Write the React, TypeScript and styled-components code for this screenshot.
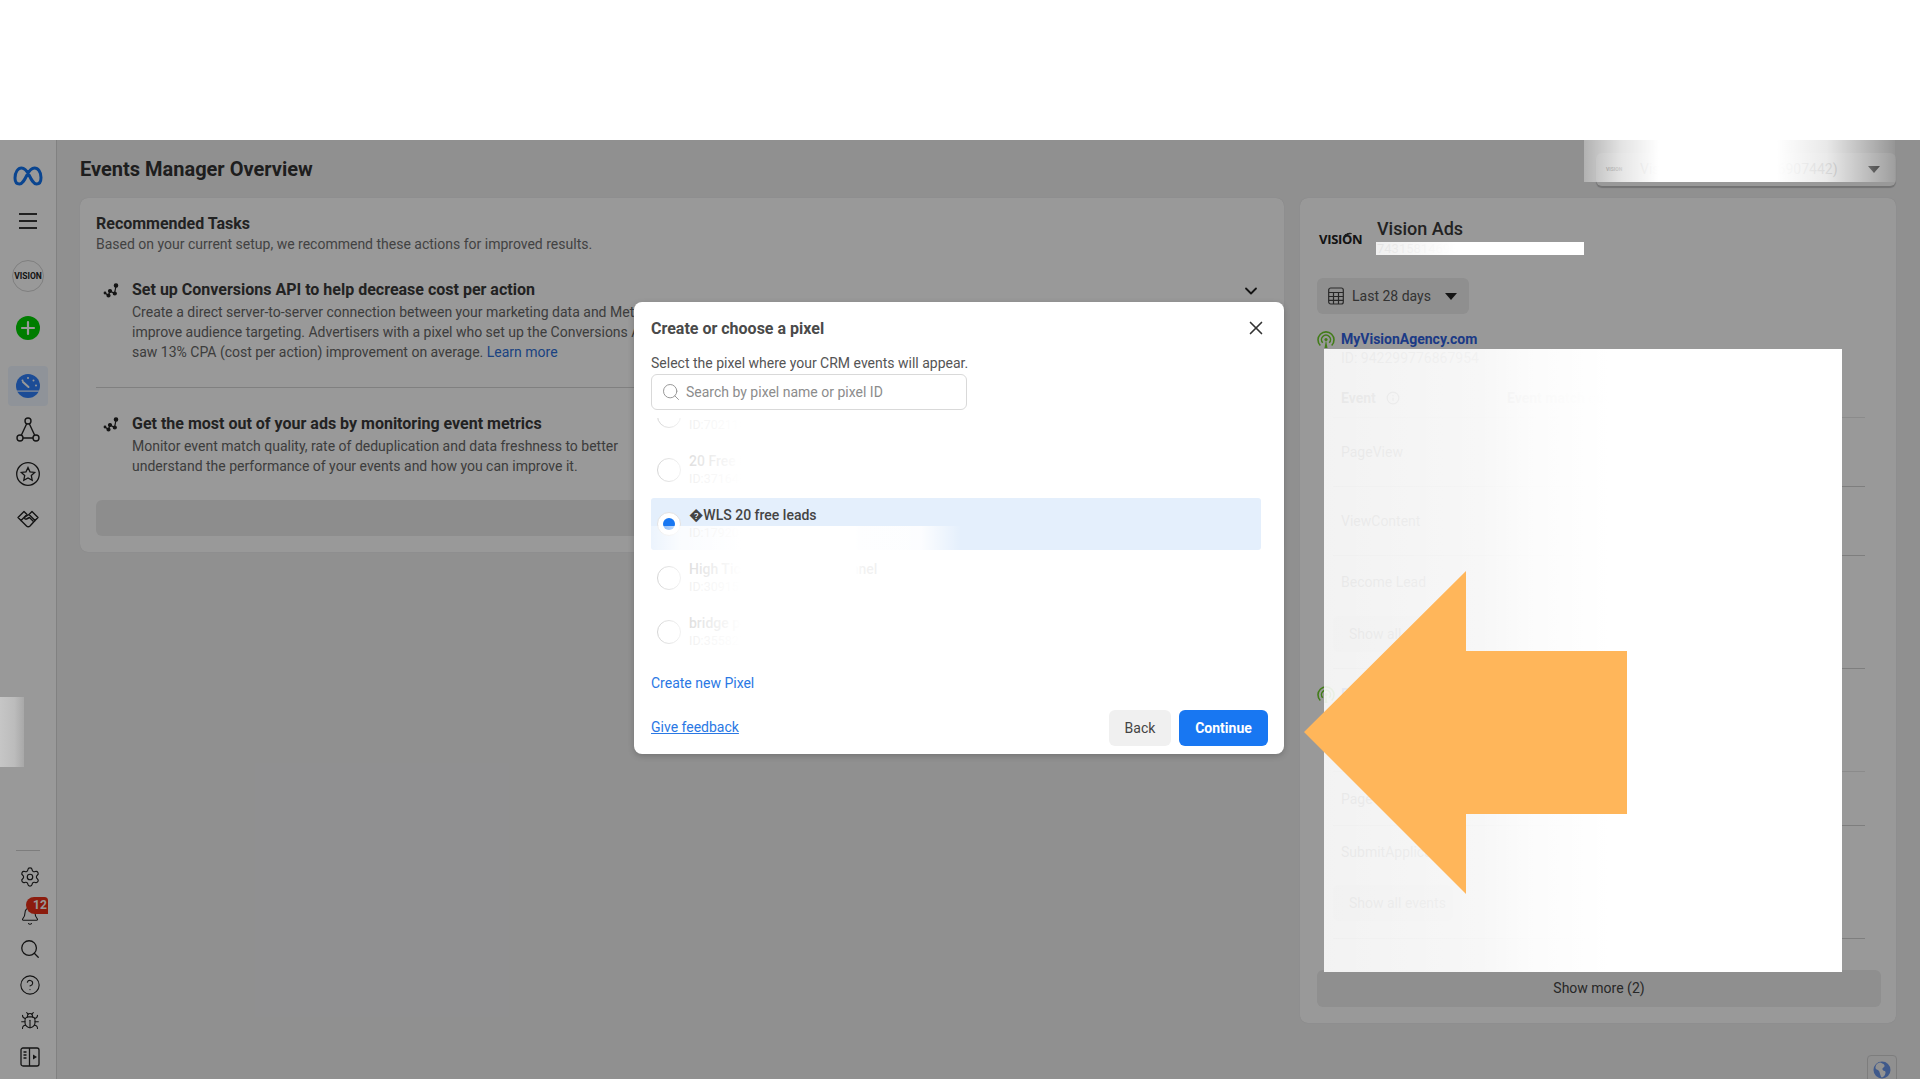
import styled, { createGlobalStyle } from "styled-components";
import { Bell, Bug, ChevronDown, CircleHelp, Info, Search, Settings, X } from "lucide-react";

const GlobalStyle = createGlobalStyle`
  html, body {
    margin: 0;
    padding: 0;
    background: #fff;
    font-family: Roboto, "DejaVu Sans", sans-serif;
  }
  * { box-sizing: border-box; }
`;

const Page = styled.div`
  display: flex;
  flex-direction: column;
  width: 1920px;
  height: 1080px;
  background: #fff;
  overflow: hidden;
`;

const TopBand = styled.div`
  height: 140px;
  flex: none;
  background: #fff;
`;

const Stage = styled.div`
  position: relative;
  display: flex;
  height: 939px;
  flex: none;
  background: #f0f0f1;
  overflow: hidden;
`;

const Dim = styled.div`
  position: absolute;
  inset: 0;
  background: rgba(0, 0, 0, 0.4);
`;

/* left rail */
const Rail = styled.nav`
  width: 57px;
  flex: none;
  display: flex;
  flex-direction: column;
  padding: 14px 0 4px;
  background: #fff;
  border-right: 1px solid #d8d8d8;
  color: #222;
`;

const RailSlot = styled.div<{ $gap?: number; $tall?: boolean; $shift?: number }>`
  height: ${(p) => (p.$tall ? 44 : 36)}px;
  margin-top: ${(p) => p.$gap ?? 0}px;
  flex: none;
  display: flex;
  align-items: center;
  justify-content: center;
  padding-left: ${(p) => p.$shift ?? 0}px;
`;

const RailSpacer = styled.div`
  flex: 1;
`;

const RailRule = styled.div`
  width: 24px;
  height: 1px;
  margin: 0 0 8px 16px;
  background: #d0d0d0;
`;

const ActiveBox = styled.div`
  width: 40px;
  height: 40px;
  display: flex;
  align-items: center;
  justify-content: center;
  border-radius: 4px;
  background: #eef6ff;
`;

const Avatar = styled.div`
  width: 32px;
  height: 32px;
  display: flex;
  align-items: center;
  justify-content: center;
  border-radius: 50%;
  border: 1px solid #d4d4d4;
  font-size: 8.5px;
  font-weight: 700;
  color: #222;
  white-space: nowrap;
`;

const BellWrap = styled.div`
  position: relative;
  width: 20px;
  height: 20px;
  margin-top: 6px;
`;

const CountBadge = styled.span`
  position: absolute;
  left: 6px;
  top: -9px;
  width: 22px;
  height: 17px;
  padding-left: 7px;
  border-radius: 9px 4px 0 10px;
  background: #ea3018;
  color: #fff;
  font-size: 12px;
  font-weight: 700;
  line-height: 17px;
`;

/* main column */
const Main = styled.main`
  flex: 1;
  min-width: 0;
  padding: 0 24px 0 23px;
`;

const Header = styled.header`
  height: 58px;
  display: flex;
  align-items: center;
  justify-content: space-between;
`;

const PageTitle = styled.h1`
  margin: 0;
  font-size: 20px;
  font-weight: 700;
  line-height: 24px;
  color: #333;
`;

const AccountPicker = styled.div`
  width: 300px;
  height: 33px;
  display: flex;
  align-items: center;
  padding: 0 16px 0 10px;
  border-radius: 6px;
  background: #fff;
  box-shadow: 0 2px 1px rgba(0, 0, 0, 0.2);
  color: #777;
  font-size: 14px;
`;

const TinyLogo = styled.span`
  width: 34px;
  font-size: 5px;
  font-weight: 700;
  color: #555;
`;

const Caret = styled.span<{ $color?: string }>`
  width: 0;
  height: 0;
  flex: none;
  margin-left: auto;
  border-left: 6px solid transparent;
  border-right: 6px solid transparent;
  border-top: 7px solid ${(p) => p.$color ?? "#333"};
`;

const Columns = styled.div`
  display: grid;
  grid-template-columns: 1204px 596px;
  gap: 16px;
  align-items: start;
`;

const Card = styled.section`
  border-radius: 8px;
  background: #fff;
  padding: 16px;
  box-shadow: 0 0 1px rgba(0, 0, 0, 0.15);
`;

const CardTitle = styled.div`
  font-size: 16px;
  font-weight: 700;
  line-height: 20px;
  color: #3a3a3a;
`;

const Muted = styled.div`
  font-size: 14px;
  line-height: 20px;
  color: #6f6f6f;
`;

const Task = styled.div<{ $top: number }>`
  display: flex;
  margin-top: ${(p) => p.$top}px;
  padding-left: 6px;
`;

const TaskIcon = styled.svg`
  width: 20px;
  height: 20px;
  flex: none;
  margin-right: 10px;
  color: #222;
`;

const TaskBody = styled.div`
  flex: 1;
`;

const TaskTitle = styled.div`
  font-size: 16px;
  font-weight: 700;
  line-height: 20px;
  margin-bottom: 2px;
  color: #3a3a3a;
`;

const TaskText = styled.div`
  font-size: 14px;
  line-height: 20px;
  color: #666;
  white-space: nowrap;
`;

const TaskLink = styled.a`
  color: #2e6fd8;
`;

const TaskChevron = styled.div`
  width: 20px;
  margin: 1px 7px 0 0;
  color: #222;
`;

const Rule = styled.div<{ $top: number }>`
  height: 1px;
  margin-top: ${(p) => p.$top}px;
  background: #d6d6d6;
`;

const WideBar = styled.div`
  height: 36px;
  margin-top: 24px;
  border-radius: 6px;
  background: #ececec;
`;

/* account card */
const SideCard = styled(Card)`
  height: 825px;
  padding: 16px 16px 16px 17px;
`;

const Brand = styled.div`
  display: flex;
  align-items: center;
  height: 46px;
`;

const BrandMark = styled.div`
  position: relative;
  width: 60px;
  margin-top: 4px;
  padding-left: 2px;
  font-size: 13px;
  font-weight: 700;
  color: #222;
  font-family: "Open Sans", sans-serif;
  letter-spacing: -0.3px;

  &::after {
    content: "";
    position: absolute;
    left: 26px;
    top: 3px;
    width: 10px;
    height: 5px;
    border-top: 2px solid #333;
    border-radius: 50%;
    transform: rotate(-24deg);
  }
`;

const BrandText = styled.div`
  display: flex;
  flex-direction: column;
`;

const BrandName = styled.div`
  font-size: 18px;
  font-weight: 500;
  line-height: 24px;
  color: #3a3a3a;
`;

const BrandId = styled.div`
  font-size: 13px;
  line-height: 16px;
  color: #666;
`;

const RangeButton = styled.div`
  width: 152px;
  height: 36px;
  margin-top: 18px;
  display: flex;
  align-items: center;
  padding: 0 12px 0 11px;
  border-radius: 6px;
  background: #eeeeee;
  color: #555;
  font-size: 14px;
  gap: 8px;
`;

const PixelHead = styled.div<{ $top: number }>`
  display: flex;
  gap: 6px;
  margin-top: ${(p) => p.$top}px;
`;

const PixelIcon = styled.svg`
  width: 18px;
  height: 20px;
  flex: none;
`;

const PixelName = styled.div`
  font-size: 14px;
  font-weight: 700;
  line-height: 20px;
  color: #2f62e0;
`;

const PixelId = styled.div`
  margin-left: 24px;
  font-size: 14px;
  line-height: 18px;
  color: #888;
`;

const EventTable = styled.div`
  width: 532px;
  margin-left: 16px;
`;

const EventRow = styled.div<{ $h: number; $head?: boolean }>`
  height: ${(p) => p.$h}px;
  display: flex;
  align-items: center;
  padding: ${(p) => (p.$head ? "12px 0 0 8px" : "0 0 0 8px")};
  border-bottom: 1px solid ${(p) => (p.$head ? "#e8e8e8" : "#d2d2d2")};
  font-size: 14px;
  font-weight: ${(p) => (p.$head ? 700 : 400)};
  color: #666;
`;

const EventStack = styled.div<{ $h: number }>`
  height: ${(p) => p.$h}px;
  padding: 16px 0 0 8px;
  border-bottom: 1px solid #d2d2d2;
  font-size: 14px;
  line-height: 20px;
  color: #666;
`;

const EventCell = styled.span`
  display: flex;
  align-items: center;
  gap: 10px;
  width: 166px;
  flex: none;
`;

const AllEvents = styled.div<{ $top: number }>`
  width: 120px;
  height: 36px;
  margin: ${(p) => p.$top}px 0 0 -8px;
  padding: 8px 16px;
  border-radius: 6px;
  background: #eeeeee;
  white-space: nowrap;
  color: #666;
`;

const ShowMore = styled.div`
  width: 564px;
  height: 37px;
  margin-top: 31px;
  padding-bottom: 2px;
  display: flex;
  align-items: center;
  justify-content: center;
  border-radius: 6px;
  background: #eeeeee;
  font-size: 14px;
  color: #444;
`;

const GlobeButton = styled.div`
  position: absolute;
  right: 23px;
  bottom: -6px;
  width: 30px;
  height: 30px;
  display: flex;
  align-items: center;
  justify-content: center;
  border: 1px solid #d0d0d0;
  border-radius: 4px;
  background: #f0f0f1;
`;

/* dialog */
const Modal = styled.div`
  position: absolute;
  left: 634px;
  top: 162px;
  width: 650px;
  height: 452px;
  padding: 16px 16px 8px 17px;
  border-radius: 8px;
  background: #fff;
  box-shadow: 0 2px 6px rgba(0, 0, 0, 0.2);
`;

const ModalHead = styled.div`
  display: flex;
  align-items: center;
  justify-content: space-between;
  height: 20px;
  padding-right: 1px;
`;

const ModalTitle = styled.div`
  font-size: 16px;
  font-weight: 700;
  color: #4a4a4a;
`;

const ModalLead = styled.div`
  margin: 15px 0 1px;
  font-size: 14px;
  line-height: 20px;
  color: #555;
`;

const SearchBox = styled.div`
  width: 316px;
  height: 36px;
  display: flex;
  align-items: center;
  gap: 5px;
  padding-left: 9px;
  border: 1px solid #d9d9d9;
  border-radius: 6px;
  font-size: 14px;
  color: #8c8c8c;
`;

const PixelList = styled.div`
  position: relative;
  width: 610px;
  height: 242px;
  margin-top: 8px;
  overflow: hidden;
`;

const PixelRow = styled.div<{ $selected?: boolean; $first?: boolean }>`
  height: 52px;
  margin-top: ${(p) => (p.$first ? -28 : 0)}px;
  margin-bottom: 2px;
  display: flex;
  align-items: center;
  gap: 8px;
  padding-left: 6px;
  border-radius: 3px;
  background: ${(p) => (p.$selected ? "#e4effc" : "transparent")};
`;

const Radio = styled.div<{ $on?: boolean }>`
  width: 24px;
  height: 24px;
  flex: none;
  display: flex;
  align-items: center;
  justify-content: center;
  border-radius: 50%;
  background: #fff;
  border: 1px solid ${(p) => (p.$on ? "#e2e2e2" : "#b8b8b8")};

  &::after {
    content: "";
    display: ${(p) => (p.$on ? "block" : "none")};
    width: 12px;
    height: 12px;
    border-radius: 50%;
    background: #1877f2;
  }
`;

const RowTitle = styled.div`
  font-size: 14px;
  font-weight: 500;
  line-height: 18px;
  color: #444;
  white-space: nowrap;
`;

const RowId = styled.div`
  font-size: 12.5px;
  line-height: 18px;
  color: #aaa;
`;

const ListVeil = styled.div<{ $top: number; $h: number }>`
  position: absolute;
  left: 0;
  top: ${(p) => p.$top}px;
  width: 310px;
  height: ${(p) => p.$h}px;
  background: linear-gradient(
    90deg,
    rgba(255, 255, 255, 0.3) 0,
    rgba(255, 255, 255, 0.8) 9%,
    rgba(255, 255, 255, 0.93) 22%,
    #fff 29%,
    #fff 66%,
    rgba(255, 255, 255, 0.93) 68%,
    rgba(255, 255, 255, 0.9) 87%,
    rgba(255, 255, 255, 0) 100%
  );
`;

const BlueLink = styled.a<{ $under?: boolean }>`
  font-size: 14px;
  line-height: 20px;
  color: #2a78e4;
  margin-bottom: ${(p) => (p.$under ? 2 : 0)}px;
  text-decoration: ${(p) => (p.$under ? "underline" : "none")};
`;

const CreateRow = styled.div`
  margin-top: 13px;
  height: 20px;
`;

const ModalFoot = styled.div`
  margin-top: 17px;
  display: flex;
  align-items: center;
  justify-content: space-between;
`;

const FootActions = styled.div`
  display: flex;
  gap: 8px;
`;

const Button = styled.div<{ $primary?: boolean }>`
  height: 36px;
  width: ${(p) => (p.$primary ? 89 : 62)}px;
  display: flex;
  align-items: center;
  justify-content: center;
  border-radius: 6px;
  font-size: 14px;
  font-weight: ${(p) => (p.$primary ? 700 : 400)};
  background: ${(p) => (p.$primary ? "#1877f2" : "#f0f0f0")};
  color: ${(p) => (p.$primary ? "#fff" : "#444")};
`;

/* white cover-ups lying over the page */
const RailPatch = styled.div`
  position: absolute;
  left: 0;
  top: 557px;
  width: 24px;
  height: 70px;
  background: linear-gradient(90deg, #c6c6c6, #bcbcbc 60%, #a8a8a8);
`;

const PickerPatch = styled.div`
  position: absolute;
  left: 1584px;
  top: 0;
  width: 311px;
  height: 42px;
  background: linear-gradient(
    90deg,
    rgba(255, 255, 255, 0.3) 0,
    rgba(255, 255, 255, 0.75) 12%,
    #fff 24%,
    #fff 62%,
    rgba(255, 255, 255, 0.8) 78%,
    rgba(255, 255, 255, 0.05) 100%
  );
`;

const IdPatch = styled.div`
  position: absolute;
  left: 1376px;
  top: 102px;
  width: 208px;
  height: 13px;
  background: linear-gradient(90deg, rgba(255, 255, 255, 0.85), rgba(255, 255, 255, 0.95) 25%, #fff 38%);
`;

const TablePatch = styled.div`
  position: absolute;
  left: 1324px;
  top: 209px;
  width: 518px;
  height: 623px;
  background: linear-gradient(
    90deg,
    rgba(255, 255, 255, 0.88) 0,
    rgba(255, 255, 255, 0.92) 30%,
    rgba(255, 255, 255, 0.97) 40%,
    #fff 55%
  );
`;

const Arrow = styled.svg`
  position: absolute;
  left: 1304px;
  top: 431px;
  width: 323px;
  height: 323px;
`;

const Mark = styled.svg`
  display: block;
`;

const MetaLogo = () => (
  <Mark width="30" height="20" viewBox="0 0 30 20" fill="none">
    <path
      d="M2 12C2 6 5 2 8.500 2c3.500 0 5.500 3 7.500 7 2.500 5 4.500 9 7.500 9 2.500 0 4.500-2 4.500-6.500C28 6 25 2 21.500 2c-3.500 0-5.500 3-7.500 7-2.500 5-4.500 9-7.500 9C3.500 18 2 15.500 2 12z"
      stroke="#1273f0"
      strokeWidth="3"
    />
  </Mark>
);

const Hamburger = () => (
  <Mark width="20" height="18" viewBox="0 0 20 18" stroke="#222" strokeWidth="1.800">
    <line x1="1" y1="2" x2="19" y2="2" />
    <line x1="1" y1="9" x2="19" y2="9" />
    <line x1="1" y1="16" x2="19" y2="16" />
  </Mark>
);

const PlusDisc = () => (
  <Mark width="24" height="24" viewBox="0 0 24 24">
    <circle cx="12" cy="12" r="12" fill="#00d000" />
    <path d="M12 6v12M6 12h12" stroke="#fff" strokeWidth="2.200" strokeLinecap="round" />
  </Mark>
);

const Gauge = () => (
  <Mark width="24" height="24" viewBox="0 0 24 24">
    <circle cx="12" cy="12" r="12" fill="#2f7ffb" />
    <rect x="0" y="16.500" width="24" height="1.200" fill="#eef6ff" />
    <circle cx="12" cy="4" r="1" fill="#fff" />
    <circle cx="6.500" cy="6.500" r="1" fill="#fff" />
    <circle cx="17.500" cy="6.500" r="1" fill="#fff" />
    <circle cx="20" cy="11.500" r="1" fill="#fff" />
    <path d="M7 8l5.500 5" stroke="#fff" strokeWidth="2" strokeLinecap="round" />
  </Mark>
);

const NodeTriangle = () => (
  <Mark width="24" height="26" viewBox="0 0 24 26" fill="none" stroke="#222" strokeWidth="1.400">
    <circle cx="12" cy="4" r="3" />
    <circle cx="4" cy="21" r="3" />
    <circle cx="20" cy="21" r="3" />
    <path d="M10.700 6.700L5.300 18.300M13.300 6.700l5.400 11.600M7 21h10" />
  </Mark>
);

const StarDisc = () => (
  <Mark width="24" height="24" viewBox="0 0 24 24" fill="none" stroke="#222" strokeWidth="1.300">
    <circle cx="12" cy="12" r="11.300" />
    <path d="M12 5.500l2 4.300 4.700.6-3.400 3.200.9 4.600-4.200-2.300-4.200 2.300.9-4.600-3.400-3.200 4.700-.6z" />
  </Mark>
);

const ShakeHands = () => (
  <Mark width="24" height="24" viewBox="0 0 24 24" fill="none" stroke="#222" strokeWidth="1.400" strokeLinejoin="round">
    <path d="M2 11.500L8 5.500l3 3-6 6z" />
    <path d="M22 11.500L16 5.500l-3 3 6 6z" />
    <path d="M5 14.500l5.500 5.500c1 1 2.500 1 3.500 0l5-5.500" />
    <path d="M13 8.500l-4 2.500c-1 1 0 2.500 1.500 2l3-1.500 4 4" />
  </Mark>
);

const PanelToggle = () => (
  <Mark width="20" height="20" viewBox="0 0 20 20" fill="none" stroke="#222" strokeWidth="1.300">
    <rect x="1" y="1" width="18" height="18" rx="2" />
    <line x1="9.500" y1="1" x2="9.500" y2="19" />
    <path d="M3.500 5h3M3.500 8h3M3.500 11h3" />
    <path d="M13 7.500l4 2.500-4 2.500z" fill="#222" stroke="none" />
  </Mark>
);

const TrendGlyph = () => (
  <TaskIcon viewBox="0 0 20 20" fill="none" stroke="currentColor" strokeWidth="1.200">
    <path d="M3 13l3.500 2.500L8 11l4.500 2.500L14 6" />
    <circle cx="6.500" cy="15.500" r="1.500" fill="currentColor" />
    <circle cx="8" cy="11" r="1.500" fill="currentColor" />
    <circle cx="12.800" cy="13.500" r="1.500" fill="currentColor" />
    <circle cx="14" cy="5.500" r="1.700" fill="currentColor" />
    <circle cx="3" cy="13" r="0.800" fill="currentColor" />
  </TaskIcon>
);

const CalendarGlyph = () => (
  <Mark width="16" height="18" viewBox="0 0 16 18" fill="none" stroke="#444" strokeWidth="1.200">
    <rect x="0.700" y="1" width="14.600" height="16" rx="2" />
    <path d="M0.700 5.500h14.600M0.700 9.500h14.600M0.700 13.300h14.600M5.500 5.500V17M10.500 5.500V17" />
  </Mark>
);

const SignalGlyph = () => (
  <PixelIcon viewBox="0 0 18 20" fill="none" stroke="#6fcf2a" strokeWidth="1.600">
    <path d="M3.300 16.500A8 8 0 1 1 14.700 16.500" />
    <path d="M5.800 13.800a4.500 4.500 0 1 1 6.400 0" />
    <circle cx="9" cy="10.500" r="1.600" fill="#6fcf2a" stroke="none" />
    <path d="M7.500 19L9 11l1.500 8z" fill="#6fcf2a" stroke="none" />
  </PixelIcon>
);

const GlobeGlyph = () => (
  <Mark width="18" height="18" viewBox="0 0 18 18">
    <circle cx="9" cy="9" r="8.500" fill="#6a94e8" />
    <path d="M7 1.500c2 1 4 1 4.500 3S9 6.500 9.500 8.500 13 9 12.500 12 10 16 9 16.500 7 12 6 10 2 9 2.500 6 5 2 7 1.500z" fill="#f2f2f2" />
  </Mark>
);

const ArrowShape = () => (
  <Arrow viewBox="0 0 323 323">
    <polygon points="0,161 162,0 162,80 323,80 323,243 162,243 162,323" fill="#ffb65a" />
  </Arrow>
);

const listRows = [
  { name: "Website leads", id: "ID:702118430915" },
  { name: "20 Free Leads", id: "ID:371640285517" },
  { name: "\uFFFDWLS 20 free leads", id: "ID:179204468331", selected: true },
  { name: "High Ticket Application funnel", id: "ID:309157742860" },
  { name: "bridge page", id: "ID:355821906147" },
];

const App = () => {
  return (
    <Page>
      <GlobalStyle />
      <TopBand />
      <Stage>
        <Rail>
          <RailSlot $tall><MetaLogo /></RailSlot>
          <RailSlot $tall $gap={1}><Hamburger /></RailSlot>
          <RailSlot $tall $gap={11}><Avatar>VISION</Avatar></RailSlot>
          <RailSlot $tall $gap={8}><PlusDisc /></RailSlot>
          <RailSlot $tall $gap={14}><ActiveBox><Gauge /></ActiveBox></RailSlot>
          <RailSlot $tall><NodeTriangle /></RailSlot>
          <RailSlot $tall><StarDisc /></RailSlot>
          <RailSlot $tall><ShakeHands /></RailSlot>
          <RailSpacer />
          <RailRule />
          <RailSlot $shift={4}><Settings size={22} strokeWidth={1.3} /></RailSlot>
          <RailSlot $shift={4}>
            <BellWrap>
              <Bell size={20} strokeWidth={1.3} />
              <CountBadge>12</CountBadge>
            </BellWrap>
          </RailSlot>
          <RailSlot $shift={4}><Search size={22} strokeWidth={1.4} /></RailSlot>
          <RailSlot $shift={4}><CircleHelp size={22} strokeWidth={1.2} /></RailSlot>
          <RailSlot $shift={4}><Bug size={20} strokeWidth={1.3} /></RailSlot>
          <RailSlot $shift={4}><PanelToggle /></RailSlot>
        </Rail>

        <Main>
          <Header>
            <PageTitle>Events Manager Overview</PageTitle>
            <AccountPicker>
              <TinyLogo>VISION</TinyLogo>
              Vision Ads (743158146907442)
              <Caret />
            </AccountPicker>
          </Header>

          <Columns>
            <Card>
              <CardTitle>Recommended Tasks</CardTitle>
              <Muted>Based on your current setup, we recommend these actions for improved results.</Muted>

              <Task $top={26}>
                <TrendGlyph />
                <TaskBody>
                  <TaskTitle>Set up Conversions API to help decrease cost per action</TaskTitle>
                  <TaskText>Create a direct server-to-server connection between your marketing data and Meta to help</TaskText>
                  <TaskText>improve audience targeting. Advertisers with a pixel who set up the Conversions API</TaskText>
                  <TaskText>
                    saw 13% CPA (cost per action) improvement on average. <TaskLink>Learn more</TaskLink>
                  </TaskText>
                </TaskBody>
                <TaskChevron><ChevronDown size={20} strokeWidth={2.2} /></TaskChevron>
              </Task>
              <Rule $top={25} />

              <Task $top={26}>
                <TrendGlyph />
                <TaskBody>
                  <TaskTitle>Get the most out of your ads by monitoring event metrics</TaskTitle>
                  <TaskText>Monitor event match quality, rate of deduplication and data freshness to better</TaskText>
                  <TaskText>understand the performance of your events and how you can improve it.</TaskText>
                </TaskBody>
              </Task>
              <WideBar />
            </Card>

            <SideCard>
              <Brand>
                <BrandMark>VISION</BrandMark>
                <BrandText>
                  <BrandName>Vision Ads</BrandName>
                  <BrandId>743158146907442</BrandId>
                </BrandText>
              </Brand>

              <RangeButton>
                <CalendarGlyph />
                Last 28 days
                <Caret $color="#222" />
              </RangeButton>

              <PixelHead $top={15}>
                <SignalGlyph />
                <PixelName>MyVisionAgency.com</PixelName>
              </PixelHead>
              <PixelId>ID: 942299776867954</PixelId>

              <EventTable>
                <EventRow $h={51} $head>
                  <EventCell>Event <Info size={14} strokeWidth={2} /></EventCell>
                  Event match quality
                </EventRow>
                <EventRow $h={69}>PageView</EventRow>
                <EventRow $h={69}>ViewContent</EventRow>
                <EventStack $h={113}>
                  Become Lead
                  <AllEvents $top={24}>Show all events</AllEvents>
                </EventStack>
              </EventTable>

              <PixelHead $top={15}>
                <SignalGlyph />
                <PixelName>Pixel</PixelName>
              </PixelHead>
              <PixelId>ID: 610482297135</PixelId>

              <EventTable>
                <EventRow $h={50} $head>
                  <EventCell>Event <Info size={14} strokeWidth={2} /></EventCell>
                  Event match quality
                </EventRow>
                <EventRow $h={54}>PageView</EventRow>
                <EventStack $h={113}>
                  SubmitApplication
                  <AllEvents $top={23}>Show all events</AllEvents>
                </EventStack>
              </EventTable>

              <ShowMore>Show more (2)</ShowMore>
            </SideCard>
          </Columns>
        </Main>

        <GlobeButton><GlobeGlyph /></GlobeButton>
        <Dim />

        <Modal>
          <ModalHead>
            <ModalTitle>Create or choose a pixel</ModalTitle>
            <X size={22} color="#333" strokeWidth={1.8} />
          </ModalHead>
          <ModalLead>Select the pixel where your CRM events will appear.</ModalLead>
          <SearchBox>
            <Search size={20} color="#999" strokeWidth={1.2} />
            Search by pixel name or pixel ID
          </SearchBox>

          <PixelList>
            {listRows.map((row, i) => (
              <PixelRow key={row.id} $first={i === 0} $selected={row.selected}>
                <Radio $on={row.selected} />
                <div>
                  <RowTitle>{row.name}</RowTitle>
                  <RowId>{row.id}</RowId>
                </div>
              </PixelRow>
            ))}
            <ListVeil $top={0} $h={80} />
            <ListVeil $top={108} $h={134} />
          </PixelList>

          <CreateRow><BlueLink>Create new Pixel</BlueLink></CreateRow>
          <ModalFoot>
            <BlueLink $under>Give feedback</BlueLink>
            <FootActions>
              <Button>Back</Button>
              <Button $primary>Continue</Button>
            </FootActions>
          </ModalFoot>
        </Modal>

        <RailPatch />
        <PickerPatch />
        <IdPatch />
        <TablePatch />
        <ArrowShape />
      </Stage>
    </Page>
  );
};

export default App;
